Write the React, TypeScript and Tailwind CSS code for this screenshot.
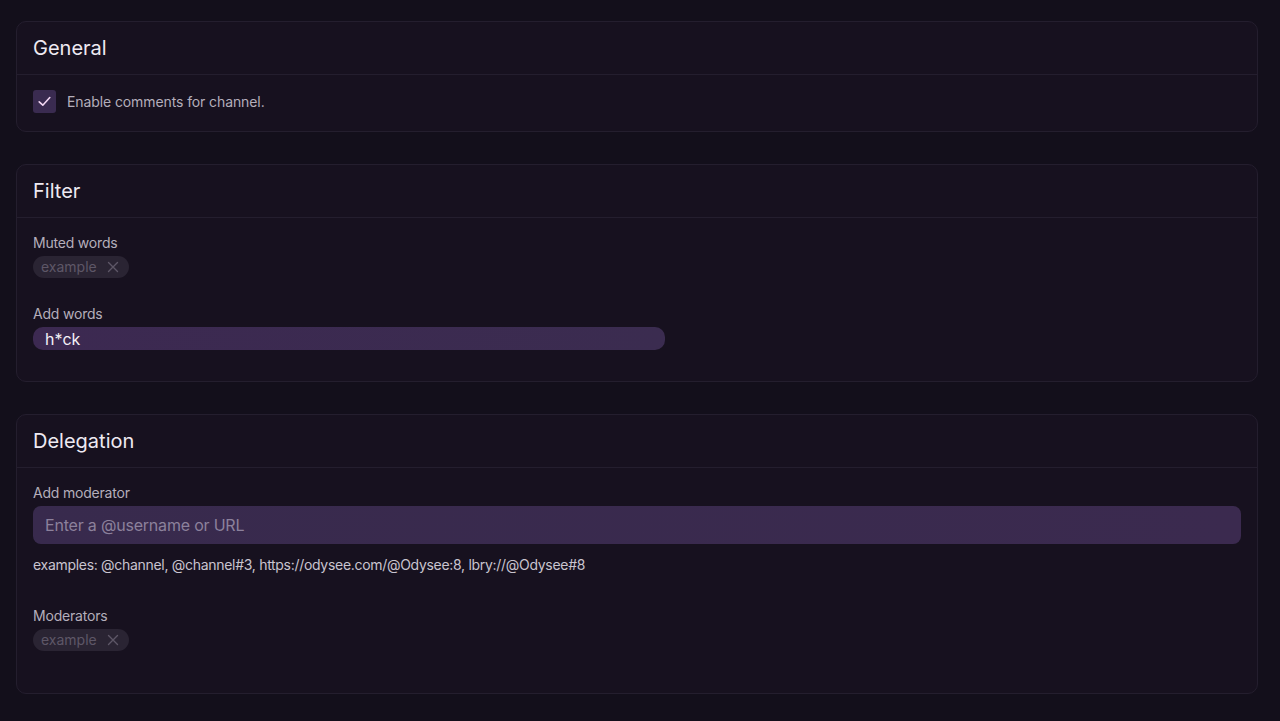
import React from "react";

function XIcon() {
  return (
    <svg width="12" height="12" viewBox="0 0 12 12" fill="none" stroke="currentColor" strokeWidth="1.4" strokeLinecap="round">
      <path d="M1.5 1.5 L10.5 10.5 M10.5 1.5 L1.5 10.5" />
    </svg>
  );
}

function Chip({ label }: { label: string }) {
  return (
    <div className="flex items-center h-[22px] rounded-[11px] bg-[#2a2433] pl-2 pr-[10px] gap-[10px] text-[14px] leading-5 text-[#5e5767]">
      <span>{label}</span>
      <span className="text-[#5e5767] flex"><XIcon /></span>
    </div>
  );
}

function Card({ title, children }: { title: string; children: React.ReactNode }) {
  return (
    <div className="rounded-[10px] border border-[#241e2e] bg-[#17111f]">
      <div className="h-[53px] flex items-center px-4 border-b border-[#241e2e]">
        <h2 className="text-[20px] text-[#eeeaf2] leading-7">{title}</h2>
      </div>
      {children}
    </div>
  );
}

export default function App() {
  return (
    <div
      className="min-h-[721px] bg-[#130f1b] pt-[21px] pl-4 pr-[22px] pb-4 flex flex-col gap-[32px]"
      style={{ fontFamily: "Inter, 'Noto Sans', sans-serif" }}
    >
      <Card title="General">
        <div className="px-4 pt-[15px] pb-[18px] flex items-center gap-[11px]">
          <div className="w-[23px] h-[23px] rounded-[3px] bg-[#3a2b50] flex items-center justify-center">
            <svg width="13" height="11" viewBox="0 0 13 11" fill="none" stroke="#f2d6f2" strokeWidth="1.6" strokeLinecap="round" strokeLinejoin="round">
              <path d="M1.2 5.8 L4.8 9.2 L11.8 1.5" />
            </svg>
          </div>
          <span className="text-[14px] tracking-[-0.1px] text-[#b4aebb]">Enable comments for channel.</span>
        </div>
      </Card>

      <Card title="Filter">
        <div className="px-4 pt-[15px] pb-[31px] flex flex-col items-start">
          <label className="text-[14px] leading-5 tracking-[-0.2px] text-[#b4aebb]">Muted words</label>
          <div className="mt-[3px] flex">
            <Chip label="example" />
          </div>
          <label className="mt-[26px] text-[14px] leading-5 tracking-[-0.2px] text-[#b4aebb]">Add words</label>
          <div className="mt-[3px] w-[632px] h-[23px] rounded-[10px] bg-gradient-to-r from-[#3c2951] to-[#3b2c50] flex items-center px-3 text-[16px] text-[#f4f0f7]">
            h*ck
          </div>
        </div>
      </Card>

      <Card title="Delegation">
        <div className="px-4 pt-[15px] pb-[42px] flex flex-col">
          <label className="text-[14px] leading-5 tracking-[-0.2px] text-[#b4aebb]">Add moderator</label>
          <div className="mt-[3px] h-[38px] rounded-[8px] bg-gradient-to-r from-[#382a4d] to-[#3b2a4f] flex items-center px-3 text-[16px] tracking-[-0.2px] text-[#8c819c]">
            Enter a @username or URL
          </div>
          <p className="mt-[11px] text-[14px] leading-5 tracking-[-0.3px] text-[#c9c4cf]">
            examples: @channel, @channel#3, https://odysee.com/@Odysee:8, lbry://@Odysee#8
          </p>
          <label className="mt-[31px] text-[14px] leading-5 tracking-[-0.2px] text-[#b4aebb]">Moderators</label>
          <div className="mt-[3px] flex">
            <Chip label="example" />
          </div>
        </div>
      </Card>
    </div>
  );
}
